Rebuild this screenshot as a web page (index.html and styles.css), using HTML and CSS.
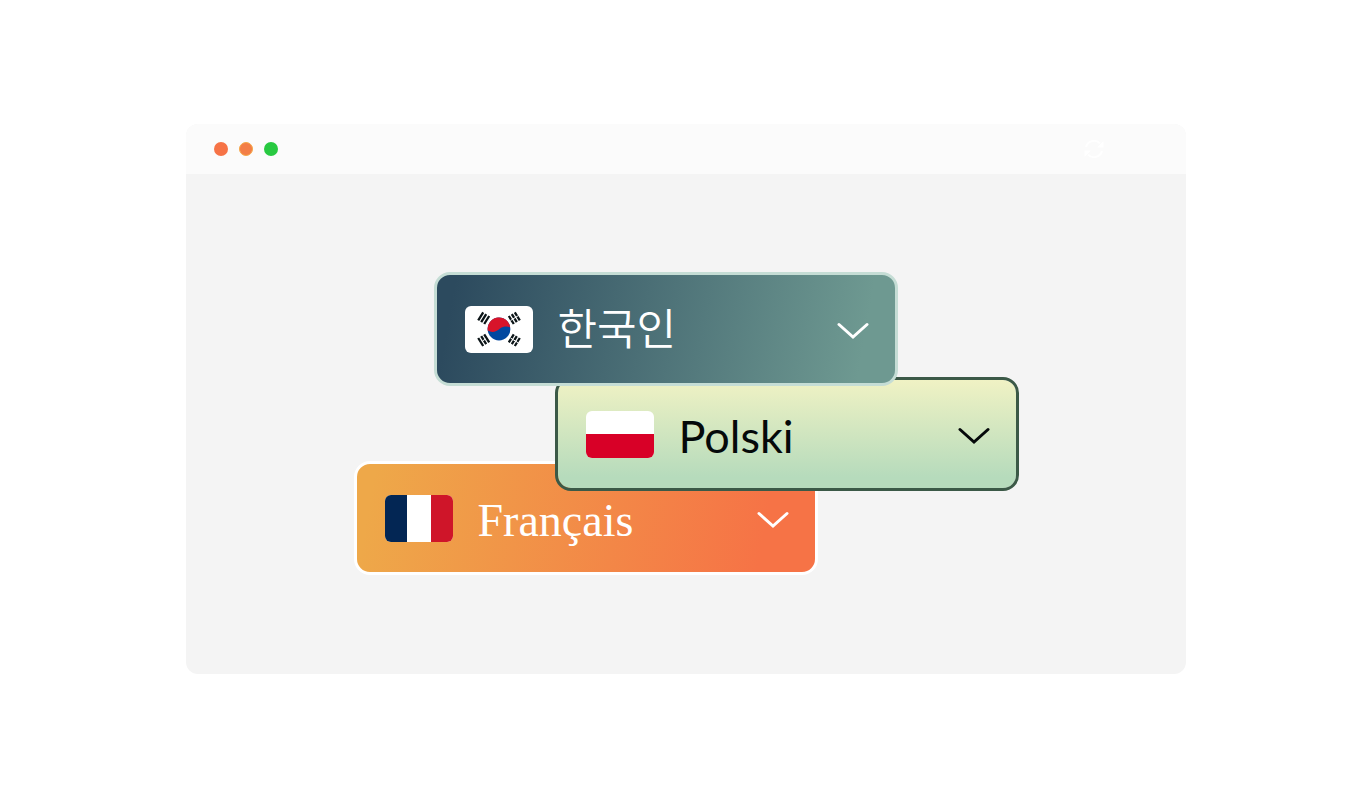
FILE: index.html
```html
<!DOCTYPE html>
<html lang="en">
<head>
    <meta charset="UTF-8">
    <meta name="viewport" content="width=device-width, initial-scale=1.0">
    <title>Language Switchers</title>
    <link rel="stylesheet" href="styles.css">
</head>
<body>
    <main class="window">
        <header class="title-bar">
            <span class="dot red"></span>
            <span class="dot orange"></span>
            <span class="dot green"></span>
            <svg class="refresh" viewBox="0 0 20 20" aria-hidden="true">
                <path d="M2 8A8.3 8.3 0 0 1 16 4.4M18 12A8.3 8.3 0 0 1 4 15.6" fill="none" stroke="#fff" stroke-width="2"/>
                <path d="M19.5 2v6.5H13zM.5 18v-6.500H7z" fill="#fff"/>
            </svg>
        </header>

        <div class="stage">
            <div class="stack">
                <div class="switcher korean">
                    <svg class="flag" viewBox="0 0 68 47" aria-hidden="true">
                        <rect width="68" height="47" fill="#fff"/>
                        <circle cx="34" cy="23" r="11.400" fill="#0047a0"/>
                        <path d="M22.700 24.500A11.400 11.400 0 1 1 45.300 21.500C43 20 38.500 20 35 22.500C31 26 27 27 22.700 24.500z" fill="#d8142a"/>
                        <g stroke="#0c1518" stroke-width="2.300">
                            <path d="M13.200 14.400l5-8M16.200 16.200l5-8M19.200 18l5-8"/>
                            <path d="M13.200 32l5 8M16.200 30.200l5 8M19.200 28.400l5 8"/>
                            <path d="M49.800 6.400l5 8M46.800 8.200l5 8M43.800 10l5 8"/>
                            <path d="M49.800 40l5-8M46.800 38.200l5-8M43.800 36.400l5-8"/>
                        </g>
                        <g stroke="#fff" stroke-width="1">
                            <path d="M45.500 14.500l8-5M45.500 32l8 5M17.500 35l3-2"/>
                        </g>
                    </svg>
                    <select aria-label="Korean switcher">
                        <option>한국인</option>
                    </select>
                    <svg class="chevron" viewBox="0 0 32 18" aria-hidden="true"><path d="M2 2.500L16 15L30 2.500"/></svg>
                </div>

                <div class="switcher polish">
                    <svg class="flag" viewBox="0 0 68 47" aria-hidden="true">
                        <rect width="68" height="47" fill="#fff"/>
                        <rect y="23" width="68" height="24" fill="#d80027"/>
                    </svg>
                    <select aria-label="Polish switcher">
                        <option>Polski</option>
                    </select>
                    <svg class="chevron" viewBox="0 0 32 18" aria-hidden="true"><path d="M2 2.500L16 15L30 2.500"/></svg>
                </div>

                <div class="switcher french">
                    <svg class="flag" viewBox="0 0 68 47" aria-hidden="true">
                        <rect width="68" height="47" fill="#fff"/>
                        <rect width="22" height="47" fill="#032654"/>
                        <rect x="46" width="22" height="47" fill="#cf1529"/>
                    </svg>
                    <select aria-label="French switcher">
                        <option>Français</option>
                    </select>
                    <svg class="chevron" viewBox="0 0 32 18" aria-hidden="true"><path d="M2 2.500L16 15L30 2.500"/></svg>
                </div>
            </div>
        </div>
    </main>
</body>
</html>
```
FILE: styles.css
```css
body {
    margin: 0;
    padding: 124px 184px 0 186px;
    background-color: #fff;
}
.window {
    border-radius: 12px;
    overflow: hidden;
    background-color: #f4f4f4;
}
.title-bar {
    display: flex;
    align-items: center;
    height: 50px;
    padding: 0 82px 0 28px;
    gap: 11px;
    background-color: #fbfbfb;
}
.dot {
    box-sizing: border-box;
    width: 14px;
    height: 14px;
    border-radius: 50%;
}
.red {
    background-color: #f67346;
}
.orange {
    background-color: #f37e46;
    border: 1px solid #f5a848;
}
.green {
    background-color: #28c941;
}
.refresh {
    width: 20px;
    height: 20px;
    margin-left: auto;
}
.stage {
    display: flex;
    justify-content: center;
    padding: 98px 20px 99px;
}
.stack {
    display: flex;
    flex-direction: column;
    width: 665px;
}
.switcher {
    position: relative;
    display: flex;
    align-items: center;
    box-sizing: border-box;
    width: 464px;
    height: 114px;
    padding: 0 26px 0 28px;
    border: 3px solid;
    border-radius: 16px;
}
.flag {
    flex: none;
    width: 68px;
    height: 47px;
    border-radius: 6px;
}
select {
    flex: 1;
    min-width: 0;
    height: 80px;
    margin-left: 25px;
    padding: 4px 0 0;
    border: none;
    background: none;
    color: inherit;
    font: inherit;
    appearance: none;
    cursor: pointer;
}
.korean select {
    padding: 0 0 6px;
}
.chevron {
    flex: none;
    width: 32px;
    height: 18px;
    margin-top: 3px;
    fill: none;
    stroke: currentColor;
    stroke-width: 3;
    stroke-linecap: round;
    pointer-events: none;
}
.korean {
    z-index: 3;
    margin-left: 80px;
    border-color: #c5ddd5;
    background: linear-gradient(100deg, #2c4a5e 4%, #6e9991 92%);
    color: #fff;
    font: 350 43px "Noto Sans CJK KR", sans-serif;
}
.polish {
    z-index: 2;
    align-self: flex-end;
    margin-top: -9px;
    border-color: #3b5947;
    background: linear-gradient(#f0f2c4, #b6dbbc 90%) padding-box;
    color: #05090a;
    font: 45px Lato, sans-serif;
}
.french {
    z-index: 1;
    margin-top: -30px;
    border-color: #fff;
    background: linear-gradient(100deg, #eea849 4%, #f67346 88%);
    color: #fff;
    font: 46px "Liberation Serif", serif;
}
```
